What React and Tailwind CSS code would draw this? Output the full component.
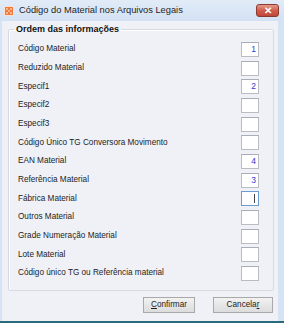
const rows = [
  { label: 'Código Material', value: '1' },
  { label: 'Reduzido Material', value: '' },
  { label: 'Especif1', value: '2' },
  { label: 'Especif2', value: '' },
  { label: 'Especif3', value: '' },
  { label: 'Código Único TG Conversora Movimento', value: '' },
  { label: 'EAN Material', value: '4' },
  { label: 'Referência Material', value: '3' },
  { label: 'Fábrica Material', value: '', focused: true },
  { label: 'Outros Material', value: '' },
  { label: 'Grade Numeração Material', value: '' },
  { label: 'Lote Material', value: '' },
  { label: 'Código único TG ou Referência material', value: '' },
];

function AppIcon() {
  return (
    <svg width="10" height="10" viewBox="0 0 10 10">
      <rect x="0" y="0" width="10" height="10" fill="#fbe3d3" />
      <rect x="1" y="1" width="8" height="8" fill="#ef7a3c" />
      <rect x="2" y="2" width="2" height="2" fill="#f9b48a" />
      <rect x="6" y="2" width="2" height="2" fill="#f9b48a" />
      <rect x="4" y="4" width="2" height="2" fill="#f9b48a" />
      <rect x="2" y="6" width="2" height="2" fill="#f9b48a" />
      <rect x="6" y="6" width="2" height="2" fill="#f9b48a" />
    </svg>
  );
}

function OrderBox({ value, focused }) {
  return (
    <div
      className={`w-[18px] h-[15px] bg-white border flex items-center justify-end pr-[2px] text-[8.5px] text-[#3434c8] ${
        focused ? 'border-[#6a9ed3]' : 'border-[#b9bcc3] border-t-[#a9adb5]'
      }`}
    >
      {focused ? <span className="w-[1px] h-[9px] bg-[#444] mr-[1px]" /> : value}
    </div>
  );
}

export default function App() {
  return (
    <div
      className="w-[284px] h-[323px] flex flex-col bg-[#d6e3f4] text-[#1c1c1c] overflow-hidden"
      style={{ fontFamily: '"Liberation Sans", Arial, sans-serif' }}
    >
      {/* title bar */}
      <div className="h-[21px] flex items-center pl-[4px] pr-[5px] bg-gradient-to-b from-[#e2ecf8] to-[#d3e1f3]">
        <AppIcon />
        <span className="ml-[5px] text-[9.3px] text-[#1e1e1e]">Código do Material nos Arquivos Legais</span>
        <div className="ml-auto w-[23px] h-[13px] rounded-[3px] border border-[#8c3a30] bg-gradient-to-b from-[#e39a8a] via-[#cf5d4c] to-[#c2463a] flex items-center justify-center">
          <span className="text-white text-[10px] font-bold leading-none">✕</span>
        </div>
      </div>

      {/* body */}
      <div className="flex-1 flex flex-col ml-[2px] mr-[6px] bg-[#f0f1f6] pl-[6px] pr-[4px]">
        <fieldset className="mt-[3px] border border-[#d4dbe3] rounded-[2px] pl-[9px] pr-[14px] pb-[9px] shadow-[inset_1px_1px_0_#ffffff]">
          <legend className="ml-[-4px] px-[2px] text-[9px] font-bold leading-[11px] text-[#111]">Ordem das informações</legend>
          <div className="flex flex-col gap-[3.67px] pt-[7px]">
            {rows.map((row) => (
              <div key={row.label} className="h-[15px] flex items-center justify-between">
                <span className="text-[8.2px] leading-none">{row.label}</span>
                <OrderBox value={row.value} focused={row.focused} />
              </div>
            ))}
          </div>
        </fieldset>

        <div className="mt-[6px] flex justify-end gap-[18px] pr-[1px]">
          <button className="w-[52px] h-[16px] border border-[#a9a9a9] bg-gradient-to-b from-[#f2f2f2] to-[#dcdcdc] text-[8.2px] leading-none">
            <span className="underline">C</span>onfirmar
          </button>
          <button className="w-[60px] h-[16px] border border-[#a9a9a9] bg-gradient-to-b from-[#f2f2f2] to-[#dcdcdc] text-[8.2px] leading-none">
            Cancela<span className="underline">r</span>
          </button>
        </div>
      </div>

      <div className="h-[2px] bg-[#276b7c]" />
    </div>
  );
}
